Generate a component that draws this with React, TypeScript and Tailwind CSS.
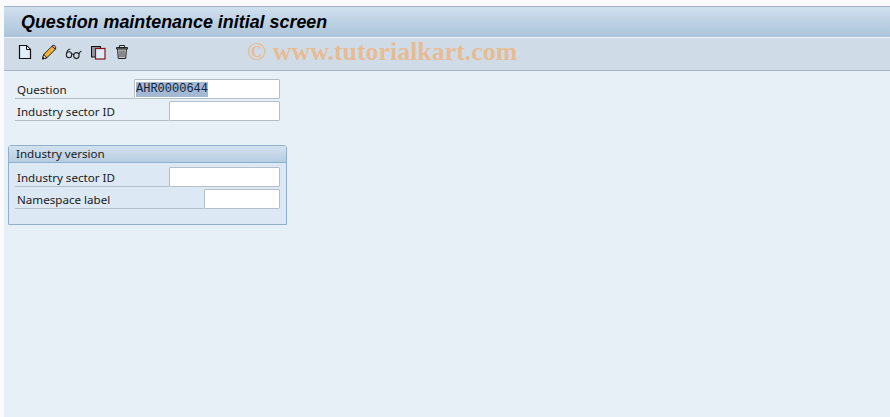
function Row({ label, width, value }: { label: string; width: string; value?: string }) {
  return (
    <div className="flex items-start h-[22px] w-[265px]">
      <span className="flex-1 h-[20px] border-b border-[#b4bfc9] text-[11.6px] leading-[19px] pl-[2px] pt-[1px] text-[#1a1a1a]">{label}</span>
      <div className={`${width} h-[20px] bg-white border border-[#b5bfc8] rounded-[1px] flex items-center pl-[1px]`}>
        {value && (
          <span className="bg-[#a3b8d3] text-[#10263f] text-[12px] leading-[15px] font-['Liberation_Mono',monospace]">
            {value}
          </span>
        )}
      </div>
    </div>
  );
}

function NewIcon() {
  return (
    <svg width="16" height="16" viewBox="0 0 16 16">
      <path d="M2.5 1.5h7l4 4v9h-11z" fill="#e1eef9" stroke="#111" strokeWidth="1.2" />
      <path d="M9.5 1.5v4h4z" fill="#fff" stroke="#111" />
    </svg>
  );
}

function PencilIcon() {
  return (
    <svg width="16" height="16" viewBox="0 0 16 16">
      <path d="M1.5 15l1.2-4.5 8.6-8.6 3.2 3.2-8.6 8.6z" fill="#f3b431" stroke="#222" />
      <path d="M1.5 15l1.2-4.5 3.2 3.2z" fill="#f8e6be" stroke="#222" />
      <path d="M1.5 15l.5-2 1.5 1.5z" fill="#111" />
      <path d="M11.3 1.9c1-1 2-.9 2.7 0s.7 1.9.5 3.2l-.2.2-3.2-3.2z" fill="#e8a0a6" stroke="#222" />
    </svg>
  );
}

function GlassesIcon() {
  return (
    <svg width="17" height="16" viewBox="0 0 17 16" fill="none" stroke="#222" strokeWidth="1.1">
      <ellipse cx="4" cy="10.8" rx="2.7" ry="3" />
      <ellipse cx="11.4" cy="11.6" rx="2.7" ry="3" />
      <path d="M6.6 10.4c.8-.7 1.6-.4 2.3.4M1.6 9.2C2 7.4 3.4 5.2 5.4 5M13.8 10c.5-1.2 1-2.4 2.6-3" />
    </svg>
  );
}

function CopyIcon() {
  return (
    <svg width="16" height="16" viewBox="0 0 16 16">
      <rect x="1.5" y="2.5" width="9" height="10.5" fill="#8f969c" stroke="#111" />
      <rect x="5.5" y="4.5" width="9.5" height="10.5" fill="#dcebf8" stroke="#8c1016" strokeWidth="1.2" />
    </svg>
  );
}

function TrashIcon() {
  return (
    <svg width="16" height="16" viewBox="0 0 16 16">
      <path d="M5.5 3V1.5h5V3" fill="#ddd" stroke="#222" />
      <path d="M2.5 3.5h11v1.5h-11z" fill="#d5d8db" stroke="#222" />
      <path d="M3.5 5h9l-.8 9.5H4.3z" fill="#c2c6ca" stroke="#222" />
      <path d="M6 6.5v6.5M8 6.5v6.5M10 6.5v6.5" stroke="#4a4a4a" />
    </svg>
  );
}

export default function App() {
  return (
    <div className="w-[890px] h-[417px] overflow-hidden bg-[#fbfbfe] pt-[6px] pl-[4px] font-['Noto_Sans',Tahoma,sans-serif]">
      <div className="h-[411px] bg-[#e8f0f7] flex flex-col">
        <div className="h-[31px] border-t border-[#9fb2c8] bg-gradient-to-b from-[#d0e0ee] to-[#abc3da] flex items-center pl-[17px]">
          <h1 className="text-[17.9px] font-bold italic text-black font-['Liberation_Sans',sans-serif]">
            Question maintenance initial screen
          </h1>
        </div>
        <div className="h-[34px] border-t border-[#eef4f9] border-b border-b-[#a3b5c8] bg-[#cfdce7] flex items-center pl-[13px] pb-[4px] gap-[8px] relative">
          <NewIcon />
          <PencilIcon />
          <GlassesIcon />
          <CopyIcon />
          <TrashIcon />
          <span className="absolute left-[243px] top-0 text-[25.9px] leading-[28px] font-bold text-[#e7bc95] font-['Liberation_Serif',serif]">
            © www.tutorialkart.com
          </span>
        </div>
        <div className="ml-[11px] mt-[8px]">
          <Row label="Question" width="w-[146px]" value="AHR0000644" />
          <Row label="Industry sector ID" width="w-[111px]" />
        </div>
        <div className="w-[279px] ml-[4px] mt-[22px] h-[80px] border border-[#8fb0cd] rounded-t-[3px] bg-[#dce8f3]">
          <div className="h-[17px] bg-gradient-to-b from-[#d3e2ef] to-[#b7cde1] border-b border-[#8fb0cd] text-[11.6px] leading-[15px] pl-[7px] text-[#1a1a1a]">
            Industry version
          </div>
          <div className="ml-[6px] mt-[4px]">
            <Row label="Industry sector ID" width="w-[111px]" />
            <Row label="Namespace label" width="w-[76px]" />
          </div>
        </div>
      </div>
    </div>
  );
}
